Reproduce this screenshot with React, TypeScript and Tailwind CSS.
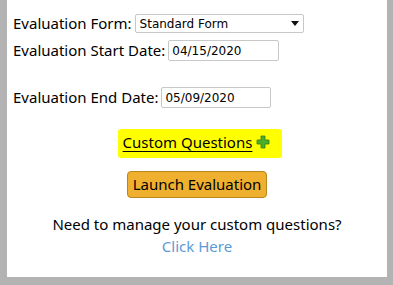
import React from "react";

function PlusIcon() {
  return (
    <svg width="14" height="14" viewBox="0 0 14 14" className="inline-block">
      <path d="M5 1h4v4h4v4H9v4H5V9H1V5h4z" fill="#4caf27" stroke="#2f7d14" strokeWidth="0.8" />
    </svg>
  );
}

export default function App() {
  return (
    <div className="h-[285px] w-[393px] bg-[#b3b3b3] pl-[7px] pr-[6px] pb-[8px] font-['Segoe_UI','Noto_Sans',sans-serif] text-black">
      {/* panel */}
      <div className="flex h-full flex-col bg-white px-[6px] pt-[14px]">
        {/* form rows */}
        <div className="flex items-center gap-[3px] text-[15px] leading-none">
          <span>Evaluation Form:</span>
          <div className="flex h-[19px] w-[169px] items-center justify-between rounded-[2px] border border-[#c8c8c8] px-[4px] font-['DejaVu_Sans',sans-serif] text-[12px]">
            <span>Standard Form</span>
            <svg width="8" height="5" viewBox="0 0 8 5">
              <path d="M0 0h8L4 5z" fill="#111" />
            </svg>
          </div>
        </div>
        <div className="mt-[7px] flex items-center gap-[3px] text-[15px] leading-none">
          <span>Evaluation Start Date:</span>
          <div className="flex h-[21px] w-[111px] items-center rounded-[2px] border border-[#c8c8c8] px-[3px] font-['DejaVu_Sans',sans-serif] text-[12px]">
            04/15/2020
          </div>
        </div>
        <div className="mt-[26px] flex items-center gap-[3px] text-[15px] leading-none">
          <span>Evaluation End Date:</span>
          <div className="flex h-[21px] w-[110px] items-center rounded-[2px] border border-[#c8c8c8] px-[3px] font-['DejaVu_Sans',sans-serif] text-[12px]">
            05/09/2020
          </div>
        </div>

        {/* custom questions */}
        <div className="mt-[21px] flex justify-center pl-[6px]">
          <div className="flex items-center gap-[4px] rounded-[3px] bg-[#ffff00] pl-[5px] pr-[12px] pt-[2px] pb-[4px] text-[15px]">
            <span className="underline underline-offset-[3px]">Custom Questions</span>
            <PlusIcon />
          </div>
        </div>

        <div className="mt-[13px] flex justify-center">
          <button className="h-[27px] rounded-[4px] border border-[#b8861a] bg-[#f0b02f] px-[5px] text-[15px] leading-none">
            Launch Evaluation
          </button>
        </div>

        <div className="mt-[15px] text-center text-[15px] leading-[22px]">
          <p>Need to manage your custom questions?</p>
          <p className="text-[#5b9bd5]">Click Here</p>
        </div>
      </div>
    </div>
  );
}
